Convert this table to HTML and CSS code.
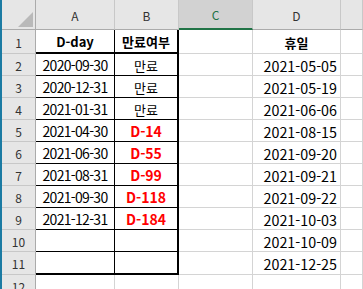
FILE: index.html
```html
<!DOCTYPE html>
<html lang="ko">
<head>
<meta charset="utf-8">
<title>휴일</title>
<link rel="stylesheet" href="styles.css">
</head>
<body>
<div class="sheet">
  <div class="edge"></div>
  <div class="grid">
    <div class="corner"><span class="tri"></span></div>
    <div class="hd">A</div>
    <div class="hd">B</div>
    <div class="hd sel">C</div>
    <div class="hd">D</div>
    <div class="hd"></div>

    <div class="rh">1</div>
    <div class="t a top b">D-day</div>
    <div class="t bb top b ko">만료여부</div>
    <div class="c r1"></div>
    <div class="c r1 b ko">휴일</div>
    <div class="c r1"></div>

    <div class="rh">2</div>
    <div class="t a date">2020-09-30</div>
    <div class="t bb ko">만료</div>
    <div class="c"></div>
    <div class="c num">2021-05-05</div>
    <div class="c"></div>

    <div class="rh">3</div>
    <div class="t a date">2020-12-31</div>
    <div class="t bb ko">만료</div>
    <div class="c"></div>
    <div class="c num">2021-05-19</div>
    <div class="c"></div>

    <div class="rh">4</div>
    <div class="t a date">2021-01-31</div>
    <div class="t bb ko">만료</div>
    <div class="c"></div>
    <div class="c num">2021-06-06</div>
    <div class="c"></div>

    <div class="rh">5</div>
    <div class="t a date">2021-04-30</div>
    <div class="t bb due">D-14</div>
    <div class="c"></div>
    <div class="c num">2021-08-15</div>
    <div class="c"></div>

    <div class="rh">6</div>
    <div class="t a date">2021-06-30</div>
    <div class="t bb due">D-55</div>
    <div class="c"></div>
    <div class="c num">2021-09-20</div>
    <div class="c"></div>

    <div class="rh">7</div>
    <div class="t a date">2021-08-31</div>
    <div class="t bb due">D-99</div>
    <div class="c"></div>
    <div class="c num">2021-09-21</div>
    <div class="c"></div>

    <div class="rh">8</div>
    <div class="t a date">2021-09-30</div>
    <div class="t bb due">D-118</div>
    <div class="c"></div>
    <div class="c num">2021-09-22</div>
    <div class="c"></div>

    <div class="rh">9</div>
    <div class="t a date">2021-12-31</div>
    <div class="t bb due">D-184</div>
    <div class="c"></div>
    <div class="c num">2021-10-03</div>
    <div class="c"></div>

    <div class="rh">10</div>
    <div class="t a"></div>
    <div class="t bb"></div>
    <div class="c"></div>
    <div class="c num">2021-10-09</div>
    <div class="c"></div>

    <div class="rh">11</div>
    <div class="t a last"></div>
    <div class="t bb last"></div>
    <div class="c"></div>
    <div class="c num">2021-12-25</div>
    <div class="c"></div>

    <div class="rh">12</div>
    <div class="c"></div>
    <div class="c"></div>
    <div class="c"></div>
    <div class="c"></div>
    <div class="c"></div>
  </div>
</div>
</body>
</html>
```
FILE: styles.css
```css
* {
  box-sizing: border-box;
}

html, body {
  margin: 0;
  padding: 0;
  background: #ffffff;
}

body {
  font-family: "Noto Sans CJK KR", "Noto Sans", sans-serif;
  font-size: 13px;
  color: #000000;
  width: 363px;
  height: 289px;
  overflow: hidden;
}

.sheet {
  display: flex;
  height: 289px;
}

/* window frame accent on the left */
.edge {
  width: 2px;
  flex: none;
  background: #1c7ba3;
}

.grid {
  flex: 1;
  display: grid;
  grid-template-columns: 34px 79px 64px 74px 88px 1fr;
  grid-template-rows: 30px 24px repeat(9, 22px) 23px 22px;
  overflow: hidden;
}

.grid > div {
  display: flex;
  align-items: center;
  justify-content: center;
  white-space: nowrap;
  overflow: hidden;
  padding-top: 1px;
}

/* select-all corner */
.corner {
  background: #e6e6e6;
  border-right: 1px solid #ababab;
  border-bottom: 1px solid #ababab;
  position: relative;
}

.tri {
  position: absolute;
  right: 2px;
  bottom: 2px;
  width: 0;
  height: 0;
  border-left: 15px solid transparent;
  border-bottom: 15px solid #b9b9b9;
}

/* column headers */
.hd {
  background: #e6e6e6;
  border-right: 1px solid #c8c8c8;
  border-bottom: 1px solid #ababab;
  font-size: 12px;
  color: #333333;
}

.hd.sel {
  background: #d2d2d2;
  color: #217346;
  border-bottom: 2px solid #217346;
}

/* row headers */
.rh {
  background: #e6e6e6;
  border-right: 1px solid #ababab;
  border-bottom: 1px solid #c8c8c8;
  font-size: 12px;
  color: #333333;
}

/* plain cells */
.c {
  border-right: 1px solid #d4d4d4;
  border-bottom: 1px solid #d4d4d4;
}

.c.num {
  justify-content: flex-end;
  padding-right: 3px;
  font-size: 14.3px;
}

/* bordered D-day table */
.t {
  border-bottom: 1px solid #000000;
}

.t.date {
  font-size: 14px;
  letter-spacing: -0.7px;
}

.t.a {
  border-right: 1px solid #000000;
}

.t.bb {
  border-right: 2px solid #000000;
}

.t.top,
.t.last {
  border-bottom-width: 2px;
}

.ko {
  font-size: 13px;
}

.b {
  font-weight: 700;
}

.due {
  color: #ff0000;
  font-weight: 700;
  font-size: 14px;
}
```
